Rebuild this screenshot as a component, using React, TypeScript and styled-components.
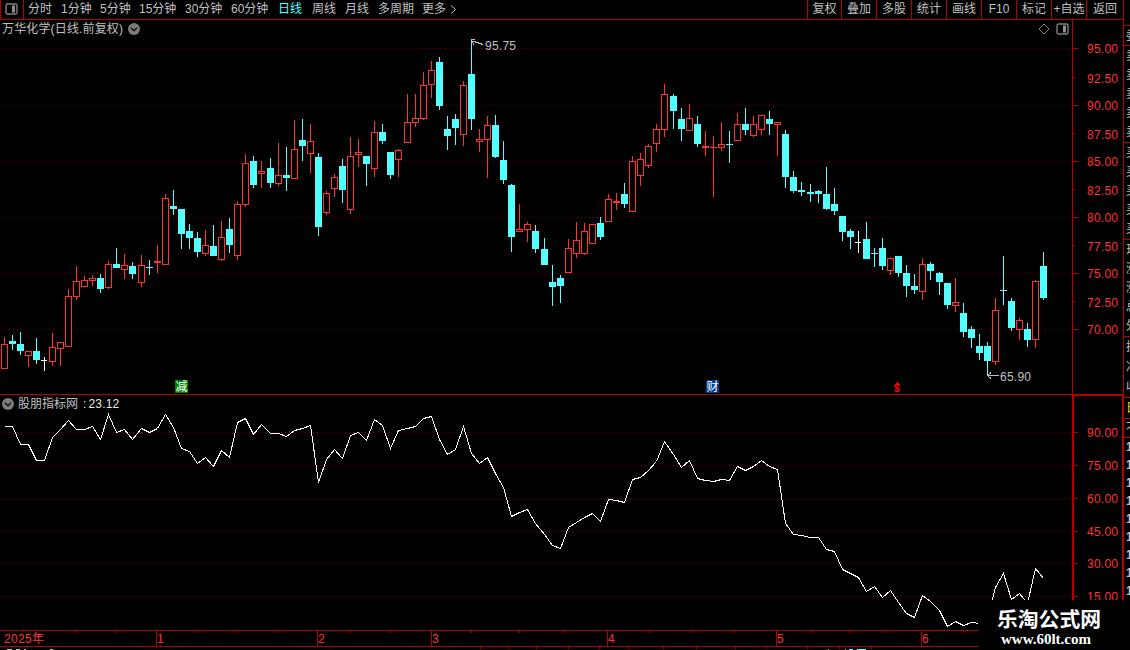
import React from 'react';
import styled, { createGlobalStyle } from 'styled-components';

type Kind = 'up' | 'down' | 'flat';
type Candle = [Kind, number, number, number, number];

// kind, high, body top, body bottom, low (screen rows)
const candles: Candle[] = [
  ['up', 337, 344, 369, 369], ['down', 335, 341, 344, 350], ['down', 332, 344, 351, 355],
  ['up', 351, 351, 356, 367], ['down', 338, 351, 360, 364], ['flat', 357, 360, 361, 371],
  ['up', 333, 347, 362, 366], ['up', 342, 342, 349, 366], ['up', 289, 296, 347, 347],
  ['up', 266, 281, 297, 300], ['up', 276, 280, 287, 287], ['up', 275, 278, 281, 286],
  ['down', 274, 278, 289, 293], ['up', 261, 264, 288, 289], ['down', 248, 264, 268, 268],
  ['up', 254, 265, 270, 279], ['down', 262, 266, 274, 279], ['up', 255, 265, 283, 287],
  ['down', 260, 267, 268, 275], ['up', 245, 261, 263, 273], ['up', 194, 198, 265, 265],
  ['down', 190, 206, 209, 215], ['down', 209, 209, 234, 249], ['down', 224, 231, 238, 249],
  ['down', 232, 238, 252, 257], ['up', 230, 245, 254, 256], ['down', 225, 246, 256, 256],
  ['up', 221, 237, 260, 261], ['down', 218, 229, 245, 253], ['up', 201, 204, 256, 260],
  ['up', 154, 163, 205, 207], ['down', 156, 161, 185, 188], ['up', 161, 171, 174, 188],
  ['down', 158, 168, 183, 188], ['up', 143, 175, 184, 186], ['down', 147, 175, 178, 191],
  ['up', 120, 149, 179, 179], ['down', 119, 140, 146, 161], ['up', 124, 141, 154, 173],
  ['down', 153, 157, 227, 236], ['up', 191, 193, 213, 215], ['up', 174, 177, 189, 197],
  ['down', 159, 166, 190, 203], ['up', 137, 156, 210, 214], ['up', 139, 152, 155, 167],
  ['down', 156, 156, 164, 186], ['up', 121, 132, 169, 177], ['down', 124, 132, 141, 144],
  ['down', 152, 152, 175, 179], ['up', 149, 150, 160, 177], ['up', 94, 122, 143, 143],
  ['up', 94, 118, 123, 127], ['up', 72, 85, 119, 120], ['up', 61, 70, 85, 98],
  ['down', 57, 62, 106, 110], ['down', 116, 129, 136, 150], ['down', 114, 119, 128, 145],
  ['up', 81, 85, 135, 146], ['down', 40, 74, 119, 130], ['up', 129, 139, 142, 152],
  ['up', 116, 125, 140, 178], ['down', 115, 125, 157, 158], ['down', 141, 160, 180, 184],
  ['down', 184, 185, 237, 252], ['up', 204, 229, 232, 232], ['up', 222, 224, 230, 242],
  ['down', 225, 231, 249, 253], ['down', 238, 249, 265, 265], ['down', 265, 282, 287, 306],
  ['down', 275, 278, 286, 303], ['up', 239, 248, 273, 273], ['up', 222, 240, 254, 258],
  ['up', 223, 231, 254, 255], ['up', 224, 224, 244, 244], ['down', 217, 223, 237, 240],
  ['up', 194, 199, 222, 222], ['up', 193, 201, 203, 210], ['down', 183, 194, 204, 208],
  ['up', 156, 161, 212, 212], ['up', 153, 159, 176, 186], ['up', 144, 146, 166, 168],
  ['up', 124, 129, 144, 152], ['up', 84, 94, 130, 137], ['down', 94, 96, 111, 129],
  ['down', 108, 119, 129, 141], ['up', 104, 118, 131, 131], ['down', 116, 124, 144, 147],
  ['up', 131, 146, 148, 156], ['up', 136, 147, 148, 197], ['up', 122, 144, 148, 151],
  ['down', 131, 144, 145, 163], ['up', 113, 124, 141, 141], ['down', 108, 124, 130, 135],
  ['up', 116, 124, 136, 137], ['up', 115, 115, 130, 135], ['down', 111, 119, 124, 135],
  ['up', 122, 122, 125, 156], ['down', 130, 134, 177, 188], ['down', 171, 177, 191, 193],
  ['down', 182, 190, 192, 196], ['down', 184, 192, 194, 202], ['down', 190, 191, 194, 203],
  ['down', 167, 194, 209, 210], ['down', 188, 204, 211, 215], ['down', 216, 216, 232, 241],
  ['down', 229, 231, 237, 249], ['flat', 231, 242, 243, 253], ['down', 222, 239, 259, 259],
  ['down', 248, 253, 254, 267], ['down', 238, 248, 266, 270], ['up', 257, 258, 271, 275],
  ['down', 256, 256, 273, 277], ['down', 265, 273, 286, 297], ['down', 274, 286, 290, 294],
  ['up', 258, 264, 292, 300], ['down', 262, 264, 271, 280], ['down', 272, 273, 282, 295],
  ['down', 283, 283, 305, 309], ['up', 278, 302, 306, 312], ['down', 303, 313, 332, 337],
  ['down', 326, 329, 338, 348], ['down', 334, 346, 353, 360], ['down', 342, 346, 361, 375],
  ['up', 298, 310, 362, 365], ['down', 256, 290, 291, 305], ['down', 298, 301, 328, 331],
  ['up', 318, 320, 330, 340], ['down', 323, 329, 340, 347], ['up', 280, 281, 340, 348],
  ['down', 252, 266, 298, 300],
];

const indicator = [
  426, 426, 444, 444, 460, 460, 437, 429, 420, 429, 429, 426, 439, 414, 432, 429, 439, 428, 432, 428,
  414, 427, 448, 451, 463, 457, 466, 450, 457, 422, 418, 434, 424, 433, 433, 436, 430, 428, 425, 482,
  459, 449, 458, 435, 432, 440, 419, 425, 448, 430, 428, 426, 418, 416, 439, 454, 449, 426, 453, 463,
  457, 473, 487, 516, 512, 509, 523, 534, 545, 548, 527, 522, 517, 513, 521, 499, 500, 502, 479, 477,
  470, 461, 441, 454, 467, 460, 478, 480, 481, 479, 480, 466, 470, 466, 460, 466, 469, 523, 534, 535,
  537, 537, 549, 551, 569, 573, 577, 591, 586, 597, 590, 602, 613, 617, 595, 601, 610, 626, 621, 625,
  622, 623, 617, 587, 573, 599, 593, 603, 568, 578,
];

const colors = { up: '#ff3232', down: '#54ffff', flat: '#ffffff' };

const columnX = (i: number) => 4 + Math.floor(0.03 + 8.0601 * i);

const periods: [string, number][] = [
  ['分时', 33], ['1分钟', 39], ['5分钟', 39], ['15分钟', 46], ['30分钟', 46], ['60分钟', 47],
  ['日线', 34], ['周线', 33], ['月线', 33], ['多周期', 44], ['更多', 28],
];
const actions = ['复权', '叠加', '多股', '统计', '画线', 'F10', '标记', '+自选', '返回'];

const priceTicks: [string, number][] = [
  ['95.00', 48], ['92.50', 77], ['90.00', 105], ['87.50', 133], ['85.00', 161], ['82.50', 189],
  ['80.00', 217], ['77.50', 245], ['75.00', 273], ['72.50', 301], ['70.00', 329],
];
const indicatorTicks: [string, number][] = [
  ['90.00', 432], ['', 449], ['75.00', 465], ['', 482], ['60.00', 498], ['', 514],
  ['45.00', 531], ['', 547], ['30.00', 563], ['', 580], ['15.00', 596], ['', 613],
];
const months: [string, number][] = [
  ['1', 156], ['2', 317], ['3', 431], ['4', 607], ['5', 776], ['6', 921],
];
const weekTicks = [36, 76, 116, 197, 237, 277, 350, 390, 471, 519, 563, 649, 692, 734, 812, 849, 885, 963];
const lowerTicks = [480, 508, 536, 568, 599, 628, 663, 696, 735, 766, 807, 839, 871];

const quoteGroups = [
  ['委'],
  ['卖', '卖', '卖', '卖', '卖'],
  ['买', '买', '买', '买', '买'],
  ['现', '涨', '涨', '总', '外'],
  ['换', '净', '收'],
];

const PanelIcon = () => (
  <svg width="13" height="12" viewBox="0 0 13 12">
    <rect x="1" y="1" width="11" height="10" rx="1.5" fill="none" stroke="#808080" strokeWidth="1.4" />
    <rect x="7" y="2.5" width="3" height="7" fill="#909090" />
  </svg>
);

const CollapseIcon = () => (
  <svg width="12" height="12" viewBox="0 0 12 12">
    <circle cx="6" cy="6" r="6" fill="#7c7c7c" />
    <path d="M3 4.8L6 7.8L9 4.8" fill="none" stroke="#141414" strokeWidth="1.4" />
  </svg>
);

const GridLine = ({ y }: { y: number }) => (
  <line x1="1" x2="1071" y1={y + 0.5} y2={y + 0.5} stroke="#900000" strokeDasharray="1 3" />
);

const Axis = ({ ticks, top, height }: { ticks: [string, number][]; top: number; height: number }) => (
  <AxisSvg width="49" height={height} viewBox={`1073 ${top} 49 ${height}`}>
    {ticks.map(([label, y]) => {
      const major = label !== '' && !label.endsWith('2.50') && !label.endsWith('7.50');
      return (
        <g key={y}>
          <rect x="1073" y={y} width={major ? 5 : 2} height="1" fill="#b40000" />
          {label && (
            <text x="1087" y={y + (major ? 5 : 6)} textLength="31" fill="#ff3232">{label}</text>
          )}
        </g>
      );
    })}
  </AxisSvg>
);

const App: React.FC = () => (
  <>
    <GlobalStyle />
    <Page>
      <Main>
        <Toolbar>
          <LayoutButton><PanelIcon /></LayoutButton>
          <Periods>
            {periods.map(([label, width]) => (
              <Period key={label} $width={width} $active={label === '日线'}>{label}</Period>
            ))}
            <svg width="7" height="9" viewBox="0 0 7 9">
              <path d="M1 0.5L5.5 4.5L1 8.5" fill="none" stroke="#c0c0c0" />
            </svg>
          </Periods>
          {actions.map(label => <Action key={label}>{label}</Action>)}
        </Toolbar>

        <Panel $height={374}>
          <Plot>
            <Header $height={18}>
              <Name>万华化学(日线.前复权)</Name>
              <CollapseIcon />
              <HeaderTools>
                <svg width="12" height="12" viewBox="0 0 12 12">
                  <path d="M6 1L11 6L6 11L1 6Z" fill="none" stroke="#808080" />
                </svg>
                <PanelIcon />
              </HeaderTools>
            </Header>
            <Chart width="1072" height="356" viewBox="0 38 1072 356">
              {priceTicks.filter((_, i) => i % 2 === 0).map(([label, y]) => <GridLine key={label} y={y} />)}
              {candles.map(([kind, high, top, bottom, low], i) => {
                const x = columnX(i);
                const color = colors[kind];
                const hollow = kind === 'up' && bottom - top > 2;
                return (
                  <g key={x} fill={color}>
                    <rect x={x} y={high} width="1" height={top - high} />
                    <rect x={x} y={bottom} width="1" height={low - bottom} />
                    {hollow
                      ? <rect x={x - 2.5} y={top + 0.5} width="6" height={bottom - top - 1} fill="#000" stroke={color} />
                      : <rect x={x - 3} y={top} width={kind === 'flat' ? 6 : 7} height={bottom - top} />}
                  </g>
                );
              })}
              <g fill="none" stroke="#c0c0c0">
                <path d="M471 39.5H475M472 41.5H475M472 41.5L474 45M474 41.5L483 44.5" />
                <path d="M999 375.5H987M991 372.5L987.5 375.5L991 378.5" />
              </g>
              <text x="485" y="50" textLength="31" fill="#c0c0c0">95.75</text>
              <text x="1000" y="381" textLength="31" fill="#c0c0c0">65.90</text>
              <rect x="175" y="380" width="13" height="13" fill="#008000" />
              <text x="175.5" y="391" fill="#fff">减</text>
              <rect x="706" y="380" width="13" height="13" fill="#003c8c" />
              <text x="706.5" y="391" fill="#fff">财</text>
              <Dollar x="894" y="392">$</Dollar>
              <path d="M894 385L897 382L900 385Z" fill="#ff0000" />
            </Chart>
          </Plot>
          <AxisColumn>
            <Axis ticks={priceTicks} top={20} height={374} />
          </AxisColumn>
        </Panel>

        <Panel $height={236} $divided>
          <Plot>
            <Header $height={17}>
              <CollapseIcon />
              <Name>股朋指标网</Name>
              <Value>:</Value>
              <Value>23.12</Value>
            </Header>
            <Chart width="1072" height="218" viewBox="0 412 1072 218">
              {indicatorTicks.filter(([label]) => label).map(([label, y]) => <GridLine key={label} y={y} />)}
              <polyline
                points={indicator.map((y, i) => `${columnX(i) + 0.5},${y + 0.5}`).join(' ')}
                fill="none"
                stroke="#fff"
              />
            </Chart>
          </Plot>
          <AxisColumn $heavy>
            <Axis ticks={indicatorTicks} top={396} height={234} />
          </AxisColumn>
        </Panel>

        <TimeAxis width="1123" height="20" viewBox="0 630 1123 20">
          <rect x="0" y="630" width="1123" height="1" />
          <rect x="0" y="646" width="1123" height="1" />
          <text x="4" y="643" textLength="40">2025年</text>
          {months.map(([label, x]) => (
            <g key={label}>
              <rect x={x} y="630" width="1" height="17" />
              <text x={x + 1} y="643">{label}</text>
            </g>
          ))}
          {weekTicks.map(x => <rect key={x} x={x} y="631" width="1" height="2" />)}
          {lowerTicks.map(x => <rect key={x} x={x} y="647" width="1" height="2" />)}
          <g fill="#c0c0c0">
            <rect x="7" y="649" width="5" height="1" />
            <rect x="16" y="649" width="4" height="1" />
            <rect x="24" y="649" width="2" height="1" />
            <rect x="50" y="649" width="3" height="1" />
            <rect x="828" y="649" width="1" height="1" />
            <rect x="845" y="649" width="1" height="1" />
          </g>
          <g fill="#54ffff">
            <rect x="849" y="649" width="4" height="1" />
            <rect x="857" y="649" width="9" height="1" />
          </g>
        </TimeAxis>
      </Main>

      <QuoteColumn>
        <Spacer />
        {quoteGroups.map((group, i) => (
          <QuoteGroup key={i} $height={[20, 97, 97, 97, 61][i]}>
            {group.map((char, j) => <span key={j}>{char}</span>)}
          </QuoteGroup>
        ))}
        <QuoteGroup $height={21} $color="#e0e000"><span>日</span></QuoteGroup>
        <QuoteGroup $height={19}><span>不</span></QuoteGroup>
        <TradeTimes>
          {Array.from({ length: 9 }, (_, i) => <span key={i}>1</span>)}
        </TradeTimes>
      </QuoteColumn>

      <SiteBadge>
        <SiteName>乐淘公式网</SiteName>
        <SiteUrl>www.60lt.com</SiteUrl>
      </SiteBadge>
    </Page>
  </>
);

export default App;

const GlobalStyle = createGlobalStyle`
  body {
    margin: 0;
    background: #000;
    overflow: hidden;
  }
`;

const Page = styled.div`
  position: relative;
  display: flex;
  width: 1130px;
  height: 650px;
  overflow: hidden;
  background: #000;
  color: #c0c0c0;
  font: 12px/18px 'Liberation Sans', 'Noto Sans CJK SC', sans-serif;

  svg {
    display: block;
    flex: none;
  }
`;

const Main = styled.main`
  display: flex;
  flex-direction: column;
  flex: none;
  width: 1123px;
`;

const Toolbar = styled.nav`
  display: flex;
  box-sizing: border-box;
  height: 20px;
  border-bottom: 1px solid #b40000;
  line-height: 19px;
  white-space: nowrap;
`;

const LayoutButton = styled.div`
  box-sizing: border-box;
  width: 24px;
  padding: 3px 0 0 4px;
  border: solid #b40000;
  border-width: 0 1px;
`;

const Periods = styled.div`
  display: flex;
  align-items: center;
  flex: 1;
  padding-left: 4px;
`;

const Period = styled.span<{ $width: number; $active: boolean }>`
  flex: none;
  width: ${({ $width }) => $width}px;
  color: ${({ $active }) => ($active ? '#54ffff' : '#c0c0c0')};
`;

const Action = styled.span`
  box-sizing: border-box;
  width: 35px;
  border-left: 1px solid #b40000;
  text-align: center;

  &:nth-last-child(9) {
    width: 34px;
  }

  &:last-child {
    width: 37px;
  }
`;

const Panel = styled.section<{ $height: number; $divided?: boolean }>`
  display: flex;
  box-sizing: border-box;
  height: ${({ $height }) => $height}px;
  border-top: ${({ $divided }) => ($divided ? '1px solid #b40000' : '0')};
`;

const Plot = styled.div`
  width: 1072px;
`;

const Header = styled.header<{ $height: number }>`
  display: flex;
  align-items: center;
  height: ${({ $height }) => $height}px;
  padding-left: 2px;
`;

const Name = styled.span`
  margin-right: 5px;
  letter-spacing: 0.15px;

  svg + & {
    margin: 0 5px 0 4px;
    letter-spacing: 0;
  }
`;

const Value = styled.span`
  margin-right: 2px;
  color: #e8e8e8;
  letter-spacing: 0.15px;
`;

const HeaderTools = styled.div`
  display: flex;
  gap: 6px;
  margin: 0 3px 0 auto;
`;

const Chart = styled.svg`
  shape-rendering: crispEdges;
`;

const AxisColumn = styled.div<{ $heavy?: boolean }>`
  box-sizing: border-box;
  width: 51px;
  border: solid #b40000;
  border-width: ${({ $heavy }) => ($heavy ? '1px 1px 0 2px' : '0 0 0 1px')};

  svg {
    margin-left: ${({ $heavy }) => ($heavy ? -1 : 0)}px;
  }
`;

const AxisSvg = styled.svg`
  shape-rendering: crispEdges;
`;

const Dollar = styled.text`
  fill: #ff0000;
  font-size: 10px;
  font-weight: bold;
`;

const TimeAxis = styled.svg`
  fill: #b40000;
  shape-rendering: crispEdges;

  text {
    fill: #ff3232;
  }
`;

const QuoteColumn = styled.aside`
  box-sizing: border-box;
  width: 7px;
  height: 650px;
  overflow: hidden;
  border-left: 1px solid #b40000;
`;

const Spacer = styled.div`
  height: 25px;
`;

const QuoteGroup = styled.div<{ $height: number; $color?: string }>`
  display: flex;
  flex-direction: column;
  justify-content: space-around;
  box-sizing: border-box;
  height: ${({ $height }) => $height}px;
  padding-left: 2px;
  border-top: 1px solid #b40000;
  color: ${({ $color }) => $color || '#c0c0c0'};

  span {
    width: 12px;
  }
`;

const TradeTimes = styled.div`
  display: flex;
  flex-direction: column;
  padding-left: 2px;
  border-top: 1px solid #b40000;
  font-weight: bold;
`;

/* covers the lower right corner of the charts */
const SiteBadge = styled.div`
  position: absolute;
  right: 0;
  bottom: 0;
  box-sizing: border-box;
  width: 152px;
  height: 50px;
  padding: 7px 0 0 19px;
  background: #000;
  color: #fff;
  white-space: nowrap;
`;

const SiteName = styled.div`
  font: bold 20.8px/23px 'Noto Sans CJK SC', sans-serif;
`;

const SiteUrl = styled.div`
  padding: 1px 0 0 4px;
  font: bold 15px/16px 'Liberation Serif', serif;
`;
